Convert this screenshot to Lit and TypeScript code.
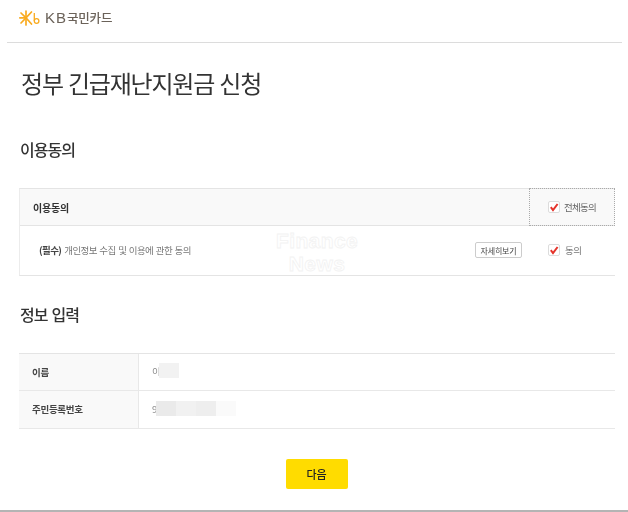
import { LitElement, html, css } from "lit";
import { customElement } from "lit/decorators.js";

const check = html`<svg class="cb" viewBox="0 0 12 12" width="12" height="12"><rect x="0.5" y="0.5" width="11" height="11" rx="1.5" fill="#fff" stroke="#dcdcdc"/><path d="M2.8 6.2 L5 9 L9.6 3" fill="none" stroke="#e5332a" stroke-width="2"/></svg>`;

@customElement("app-root")
export class AppRoot extends LitElement {
  static styles = css`
    :host { display: block; width: 628px; height: 512px; background: #fff; overflow: hidden; position: relative;
      font-family: "Noto Sans CJK KR", "Noto Sans", sans-serif; color: #333; box-sizing: border-box; }
    .page { display: flex; flex-direction: column; height: 512px; box-sizing: border-box; border-bottom: 2px solid #b4b4b4; filter: blur(0.35px); }
    .header { margin-left: 7px; width: 615px; height: 43px; border-bottom: 1px solid #dcdcdc; display: flex; align-items: center; padding-left: 12px; padding-bottom: 7px; gap: 4px; flex: none; box-sizing: border-box; }
    .logo-text { display: flex; align-items: center; color: #6b6259; line-height: 14px; }
    .kb { font-family: "Liberation Sans", sans-serif; font-size: 15px; letter-spacing: 1px; margin-right: 0; }
    .kcard { font-size: 12.5px; font-weight: 500; letter-spacing: -0.2px; }
    .content { padding: 0 13px 0 19px; display: flex; flex-direction: column; flex: 1; }
    h1 { margin: 22px 0 0 2px; font-size: 24px; font-weight: 400; line-height: 36px; color: #333; letter-spacing: -1.2px; word-spacing: 1px; height: 36px; }
    h2 { margin: 0 0 0 1px; font-size: 16px; font-weight: 500; line-height: 24px; color: #333; letter-spacing: -1px; word-spacing: 1.5px; }
    .h-agree { margin-top: 36px; }
    .h-info { margin-top: 26px; }
    .t1 { margin-top: 27px; border-top: 1px solid #e4e4e4; border-bottom: 1px solid #e4e4e4; border-left: 1px solid #ececec; }
    .t1-head { display: flex; height: 37px; background: #f9f9f9; border-bottom: 1px solid #e4e4e4; box-sizing: border-box; }
    .t1-title { flex: 1; display: flex; align-items: center; padding-left: 13px; font-size: 10px; font-weight: 700; color: #333; letter-spacing: -0.2px; }
    .all { width: 86px; box-sizing: border-box; border: 1px dotted #aaa; margin-top: -1px; height: 38px; display: flex; align-items: center; padding-left: 18px; gap: 4px; font-size: 9.5px; color: #666; letter-spacing: -0.7px; }
    .t1-row { display: flex; align-items: center; height: 49px; padding-left: 19px; font-size: 9.5px; color: #777; padding-bottom: 1px; box-sizing: border-box; }
    .t1-row b { color: #444; font-weight: 700; margin-right: 3px; }
    .t1-text { flex: 1; letter-spacing: -0.6px; word-spacing: 1px; }
    .more { box-sizing: border-box; width: 47px; height: 16px; border: 1px solid #ccc; border-radius: 2px; background: #fff; display: flex; align-items: center; justify-content: center; font-size: 8px; color: #444; margin-right: 26px; white-space: nowrap; letter-spacing: -0.2px; }
    .agree { width: 67px; display: flex; align-items: center; gap: 5px; color: #777; letter-spacing: -0.6px; }
    .cb { flex: none; }
    .t2 { margin-top: 27px; border-top: 1px solid #e4e4e4; }
    .t2-row { display: flex; height: 37px; border-bottom: 1px solid #e8e8e8; box-sizing: border-box; }
    .t2-row.tall { height: 38px; }
    .t2-label { width: 120px; background: #f9f9f9; border-right: 1px solid #e8e8e8; box-sizing: border-box; display: flex; align-items: center; padding: 0 0 1px 13px; font-size: 9.5px; font-weight: 700; color: #444; letter-spacing: -0.3px; }
    .t2-val { display: flex; align-items: center; padding-left: 13px; font-size: 9.5px; color: #888; margin-top: -2px; }
    .mask { display: flex; margin: -1px 0 0 -2px; }
    .mask-id { margin-left: -1px; }
    .mask i { display: block; width: 20px; height: 15px; }
    .next-wrap { display: flex; justify-content: center; margin-top: 30px; padding-right: 1px; }
    .next { width: 62px; height: 30px; background: #ffdc00; border-radius: 2px; border: none; display: flex; align-items: center; justify-content: center; font: 500 11px "Noto Sans CJK KR", sans-serif; color: #222; padding: 0; }
    .mark { position: absolute; left: 262px; top: 229px; width: 110px; text-align: center; font: 700 21px/23px "Liberation Sans", sans-serif; color: #fff; -webkit-text-stroke: 0.8px #f2f2f2; letter-spacing: 0.4px; }
  `;

  render() {
    return html`
      <div class="page">
        <div class="header">
          <svg width="22" height="16" viewBox="0 0 22 16">
            <g stroke="#f9ab1f" stroke-width="1.7" fill="none" stroke-linecap="round">
              <path d="M0.8 7.8 H7"/><path d="M7 1 V15"/><path d="M2 3 L7 7.8 L2 13"/><path d="M12.5 2 L7 7.8 L12.5 14"/>
            </g>
            <path d="M15.3 3 V11" stroke="#f9ab1f" stroke-width="1.3" fill="none"/>
            <circle cx="17.6" cy="11" r="2.3" fill="none" stroke="#f9ab1f" stroke-width="1.3"/>
          </svg>
          <div class="logo-text"><span class="kb">KB</span><span class="kcard">국민카드</span></div>
        </div>
        <div class="content">
          <h1>정부 긴급재난지원금 신청</h1>
          <h2 class="h-agree">이용동의</h2>
          <div class="t1">
            <div class="t1-head">
              <div class="t1-title">이용동의</div>
              <div class="all">${check}<span>전체동의</span></div>
            </div>
            <div class="t1-row">
              <div class="t1-text"><b>(필수)</b>개인정보 수집 및 이용에 관한 동의</div>
              <div class="more">자세히보기</div>
              <div class="agree">${check}<span>동의</span></div>
            </div>
          </div>
          <h2 class="h-info">정보 입력</h2>
          <div class="t2">
            <div class="t2-row">
              <div class="t2-label">이름</div>
              <div class="t2-val"><span>이</span><div class="mask"><i style="background:#f2f2f2"></i></div></div>
            </div>
            <div class="t2-row tall">
              <div class="t2-label">주민등록번호</div>
              <div class="t2-val"><span>9</span><div class="mask mask-id"><i style="background:#eaeaea"></i><i style="background:#f1f1f1"></i><i style="background:#eeeeee"></i><i style="background:#fafafa"></i></div></div>
            </div>
          </div>
          <div class="next-wrap"><button class="next">다음</button></div>
        </div>
      </div>
      <div class="mark">Finance<br />News</div>
    `;
  }
}
